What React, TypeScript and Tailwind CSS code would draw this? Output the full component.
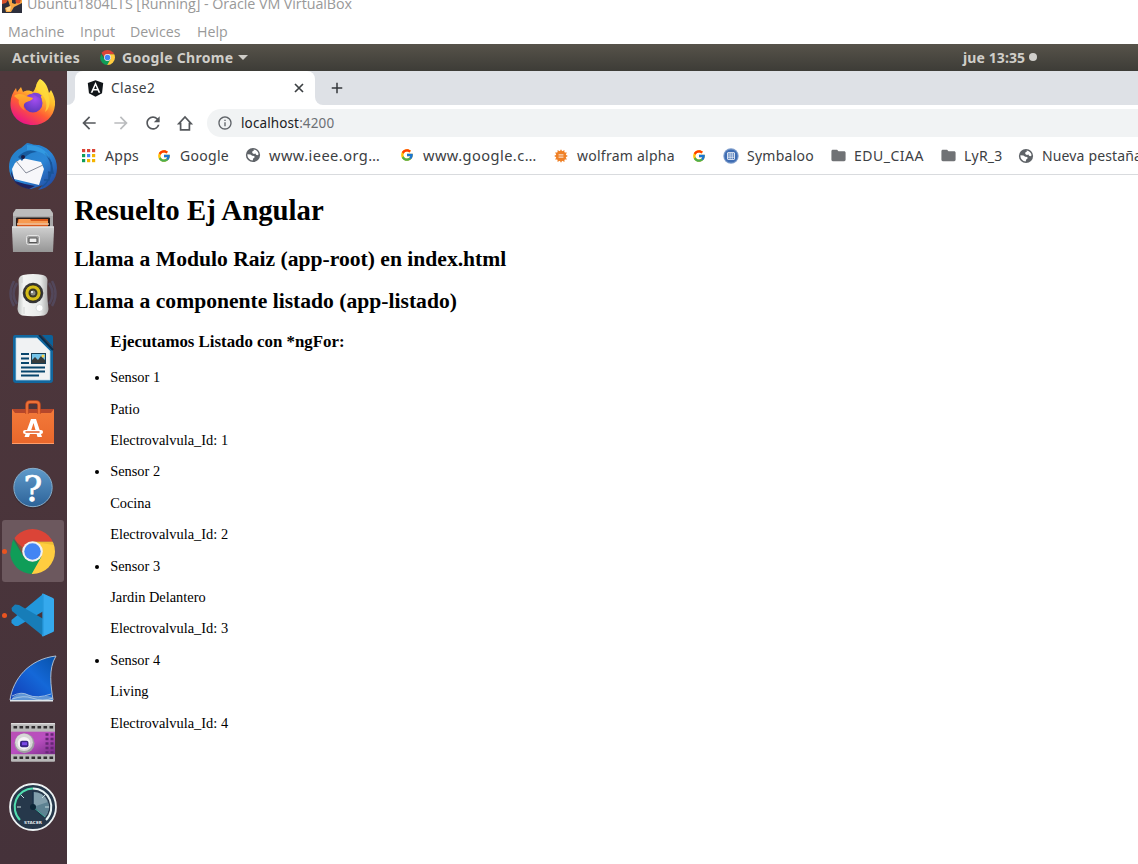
import React from "react";
import { FcGoogle } from "react-icons/fc";
import { FaAngular } from "react-icons/fa";
import { MdArrowBack, MdArrowForward, MdRefresh, MdInfoOutline, MdFolder, MdAdd } from "react-icons/md";

function ChromeIcon({ className, id }: { className: string; id: string }) {
  return (
    <svg viewBox="0 0 48 48" className={className}>
      <defs>
        <clipPath id={id}>
          <circle cx="24" cy="24" r="24" />
        </clipPath>
      </defs>
      <g clipPath={`url(#${id})`}>
        <path d="M0 0H48V13.5H24L14.5 29Z" fill="#db4437" />
        <path d="M3 10L14.6 29.5L24 35L34 29.5L24 50H-4Z" fill="#0f9d58" />
        <path d="M24 13.5H50V50H22L33.5 29.5Z" fill="#ffcd40" />
        <path d="M24 13.5H46L47 17Z" fill="#c79a1b" opacity=".3" />
        <path d="M14.6 29.5L3 10L16 22Z" fill="#0b6b3c" opacity=".4" />
      </g>
      <circle cx="24" cy="24" r="11" fill="#f1f1f1" />
      <circle cx="24" cy="24" r="8.8" fill="#4285f4" />
    </svg>
  );
}

function Globe() {
  return (
    <svg viewBox="0 0 16 16" className="size-4">
      <circle cx="8" cy="8" r="7.1" fill="#5f6368" />
      <path d="M8.6 2.4C11 2.5 13.3 4.5 13.6 7.2L12.6 8.3L11 7.8L10.6 6.6L8.900 6.9L7.2 5.9L7.4 4.3L8.8 3.7Z" fill="#fff" />
      <path d="M2.4 7.3L5.4 7.5L7.2 8.8L9.2 8.9L9.7 10.3L8.2 11.4L7.7 13.5C4.7 13.4 2.2 10.7 2.4 7.3Z" fill="#fff" />
    </svg>
  );
}

function AppsGrid() {
  const colors = ["#db4437", "#db4437", "#db4437", "#0f9d58", "#4285f4", "#f4b400", "#0f9d58", "#f4b400", "#f4b400"];
  return (
    <svg viewBox="0 0 14 14" className="size-[14px]">
      {colors.map((c, i) => (
        <rect key={i} x={(i % 3) * 5} y={Math.floor(i / 3) * 5} width="3.2" height="3.2" fill={c} />
      ))}
    </svg>
  );
}

function Wolfram() {
  return (
    <svg viewBox="-8 -8 16 16" className="size-[14px]">
      <g fill="#ef8026">
        {[0, 30, 60, 90, 120, 150, 180, 210, 240, 270, 300, 330].map((a) => (
          <path key={a} d="M-1.9 -4.5L0 -7.8L1.9 -4.5Z" transform={`rotate(${a})`} />
        ))}
        <circle r="5.5" />
      </g>
      <path d="M-2.8 -1.3H2.8M-2.8 1.3H2.8" stroke="#fff" strokeWidth="1" />
    </svg>
  );
}

function Symbaloo() {
  return (
    <svg viewBox="0 0 16 16" className="size-4">
      <circle cx="8" cy="8" r="7.7" fill="#7d9ccb" />
      <circle cx="8" cy="8" r="6.6" fill="#3f6db3" />
      <rect x="4.2" y="4.2" width="7.6" height="7.6" rx="1" fill="#fff" />
      <path d="M5.2 5.2h1.5v1.5H5.2zM7.4 5.2h1.4v1.5H7.4zM9.5 5.2H11v1.5H9.5zM5.2 7.3h1.5v1.5H5.2zM7.4 7.3h1.4v1.5H7.4zM9.5 7.3H11v1.5H9.5zM5.2 9.5h1.5V11H5.2zM7.4 9.5h1.4V11H7.4zM9.5 9.5H11V11H9.5z" fill="#3f6db3" />
    </svg>
  );
}

function Home() {
  return (
    <svg viewBox="0 0 18 18" className="size-[18px]" fill="none" stroke="#55585c" strokeWidth="1.7">
      <path d="M2.8 9.6H4.6V15.9H13.400V9.6H15.2L9 2.9Z" />
    </svg>
  );
}

function TabClose() {
  return (
    <svg viewBox="0 0 14 14" className="size-[14px]" fill="none" stroke="#3c4043" strokeWidth="1.7">
      <path d="M3 3L11 11M11 3L3 11" />
    </svg>
  );
}

function VirtualBoxIcon() {
  return (
    <svg viewBox="0 0 20 13" className="h-[13px] w-5">
      <rect width="20" height="13" fill="#2d2f3c" />
      <path d="M0 0H6L4 3L0 4Z" fill="#d9532c" />
      <path d="M6 0H10L10 3L13 4L19 0H20V3L12 7L9 12H4L3 8L8 6Z" fill="#f6a744" />
      <path d="M4 8L9 6L8 11H5Z" fill="#ffd58d" />
      <circle cx="16" cy="1" r="2.5" fill="#dc4f2c" />
    </svg>
  );
}

const Firefox = () => (
  <svg viewBox="0 0 48 48" className="size-12">
    <defs>
      <linearGradient id="ff1" x1=".85" y1=".05" x2=".3" y2="1">
        <stop offset="0" stopColor="#fff14b" />
        <stop offset=".35" stopColor="#ffbd2c" />
        <stop offset=".65" stopColor="#ff5a35" />
        <stop offset="1" stopColor="#e8118a" />
      </linearGradient>
      <radialGradient id="ff2" cx=".6" cy=".3" r=".8">
        <stop offset="0" stopColor="#a54df0" />
        <stop offset="1" stopColor="#5535b5" />
      </radialGradient>
      <linearGradient id="ff3" x1="0" y1="0" x2="0" y2="1">
        <stop offset="0" stopColor="#ffb02e" />
        <stop offset="1" stopColor="#ff7a2a" />
      </linearGradient>
    </defs>
    <path d="M31 0C37 3 39 9 40 14L42 11C45 16 46.5 21 46 26C45 38 36 46 24 46C11 46 1 37 1.5 24C1.7 18 4 13 7 9L8 13L12 8L14 13C17 11 21 11 24 13C27 10 27 4 31 0Z" fill="url(#ff1)" />
    <circle cx="24" cy="24" r="9.5" fill="url(#ff2)" />
    <path d="M23 14C27 13 31 14 33 17C31 17 32 18 33 21C30 18 26 17 23 14Z" fill="#7c43d6" />
    <path d="M5 17C9 14 14 15 17 17L24 19C23 22 19 22 16 24C14 26 14 29 17 32C10 29 9 23 10 21Z" fill="url(#ff3)" />
    <path d="M31 0C31 6 38 10 40 18C42 26 39 31 36 33C40 23 35 17 30 13C26 11 26 4 31 0Z" fill="#ffdd3c" opacity=".7" />
  </svg>
);

const Thunderbird = () => (
  <svg viewBox="0 0 48 48" className="size-12">
    <defs>
      <linearGradient id="tb" x1="0" y1="0" x2="1" y2="1">
        <stop offset="0" stopColor="#237fc6" />
        <stop offset=".55" stopColor="#2b86d6" />
        <stop offset="1" stopColor="#203a93" />
      </linearGradient>
    </defs>
    <path d="M18 0C24 1 24 2 30 2C41 5 48 14 48 25C48 37 40 45 29 47L34 42L22 46C9 44 0 36 0 24C0 15 5 8 12 5Z" fill="url(#tb)" />
    <path d="M6 20L13 15L32 19L35 26L30 42L5 36L3 26Z" fill="#f7f7fa" />
    <path d="M7 18L17 30L34 22" fill="none" stroke="#858b99" strokeWidth="1" />
    <path d="M2 28L6 38L16 41L26 43L20 46C9 44 2 38 2 28Z" fill="#20235f" />
    <path d="M9 14C14 8 21 6 28 9C22 9 16 13 13 18Z" fill="#165b9f" />
    <circle cx="14" cy="14" r="2" fill="#1b1c43" />
    <path d="M36 10C46 20 44 36 33 44M42 19L44 30L39 29M40 29L40 37L35 37" fill="none" stroke="#195398" strokeWidth="1.500" />
    <path d="M18 2C28 2 38 6 41 16C34 9 27 7 18 7Z" fill="#38a4e8" opacity=".65" />
  </svg>
);

const Files = () => (
  <svg viewBox="0 0 48 48" className="size-12">
    <defs>
      <linearGradient id="fl" x1="0" y1="0" x2="0" y2="1">
        <stop offset="0" stopColor="#d0d0d0" />
        <stop offset="1" stopColor="#969696" />
      </linearGradient>
    </defs>
    <path d="M7 2H41L44 6V24H4V6Z" fill="#a9a9a9" />
    <path d="M7 2H41L44 7V9H4V7Z" fill="#bcbcbc" />
    <rect x="7" y="10.500" width="34" height="9" rx="1" fill="#291c18" />
    <path d="M9 12H39V20H8Z" fill="#d9581a" />
    <path d="M10 12H21L22 14H39V16H9Z" fill="#f79a50" />
    <path d="M8 17H40" stroke="#fff0cf" strokeWidth="1.200" />
    <path d="M3 19.500H45V23L44 45H4L3 23Z" fill="url(#fl)" />
    <path d="M3 20H45" stroke="#eee" />
    <rect x="17.500" y="28.500" width="13" height="9" rx="2" fill="#a3a3a3" stroke="#e5e5e5" />
    <rect x="20" y="31" width="8" height="4.500" rx=".5" fill="#eee" stroke="#555" strokeWidth="1.100" />
  </svg>
);

const Speaker = () => (
  <svg viewBox="0 0 48 48" className="size-12">
    <defs>
      <linearGradient id="sp" x1="0" y1="0" x2="1" y2="0">
        <stop offset="0" stopColor="#bcc1bf" />
        <stop offset=".2" stopColor="#f4f5f4" />
        <stop offset=".75" stopColor="#e7e9e8" />
        <stop offset="1" stopColor="#aaa" />
      </linearGradient>
    </defs>
    <path d="M5 10Q-2 23 5 35M43 10Q50 23 43 35M8 12Q1 23 8 33M40 12Q47 23 40 33" fill="none" stroke="#5d6696" strokeWidth="2.500" opacity=".35" />
    <path d="M14 4Q24 2 34 4Q38 5 38.500 9Q37.500 22 39.500 38Q39 43 35 44.500Q24 46 13 44.500Q9 43 8.500 38Q10.500 22 9.500 9Q10 5 14 4Z" fill="url(#sp)" />
    <circle cx="24" cy="22" r="10.300" fill="#363638" />
    <circle cx="24" cy="22" r="8" fill="#d5bd18" stroke="#151515" strokeWidth=".6" />
    <circle cx="24" cy="22" r="4.500" fill="#3b3828" />
    <circle cx="24" cy="22" r="2.500" fill="#8a8b84" />
    <circle cx="23" cy="21" r="1.100" fill="#fff" />
    <circle cx="30.500" cy="37" r="3.500" fill="#fff" stroke="#d0d2d2" strokeWidth=".7" />
    <path d="M13 6V12M35 6V12M15 36V43" stroke="#cbcecd" strokeWidth=".8" />
  </svg>
);

const Writer = () => (
  <svg viewBox="0 0 48 48" className="size-12">
    <path d="M6 0H31L44 13V45Q44 48 41 48H7Q4 48 4 45V3Q4 0 6 0Z" fill="#11679f" />
    <path d="M33 0H42Q44 0 44 2V12Z" fill="#0b629b" />
    <path d="M30 0L44 15" stroke="#0a2d4a" strokeWidth="2" />
    <path d="M7 3H28L41 16V45H7Z" fill="#f0f2f3" stroke="#b4d7e9" strokeWidth=".7" />
    <path d="M12 19H20M12 23.500H20M12 28H20M12 32.500H36M12 36.500H36M12 40.500H30" stroke="#07456c" strokeWidth="1.800" />
    <rect x="22.500" y="18.500" width="14" height="10" fill="#74c4e9" stroke="#173f57" />
    <path d="M23 28V25L26 22L29 25L32 21L36 25V28Z" fill="#373b3b" />
    <circle cx="34" cy="21" r="1.500" fill="#ffd246" />
  </svg>
);

const Software = () => (
  <svg viewBox="0 0 48 48" className="size-12">
    <defs>
      <linearGradient id="sw" x1="0" y1="0" x2="0" y2="1">
        <stop offset="0" stopColor="#f37a3a" />
        <stop offset="1" stopColor="#e9672b" />
      </linearGradient>
    </defs>
    <path d="M3 10H45V45H3Z" fill="url(#sw)" />
    <path d="M3 10H45L42 14H6Z" fill="#b5472b" />
    <path d="M18 15V6Q18 3 21 3H27Q30 3 30 6V15" fill="none" stroke="#c44d22" strokeWidth="3.500" />
    <path d="M18 15V6Q18 3 21 3H27Q30 3 30 6V15" fill="none" stroke="#ed7138" strokeWidth="1.800" />
    <path d="M22 20H27L33 38H28.500L24.500 24L20 38H15.500Z" fill="#fff" />
    <path d="M16 33H32" stroke="#fff" strokeWidth="4" strokeLinecap="round" />
    <path d="M17 33H30" stroke="#e45d27" strokeWidth="1.500" strokeLinecap="round" />
    <path d="M3 44.500H45" stroke="#ff9d6a" />
  </svg>
);

const Help = () => (
  <svg viewBox="0 -0.5 48 48" className="size-12">
    <defs>
      <linearGradient id="hp" x1="0" y1="0" x2="0" y2="1">
        <stop offset="0" stopColor="#5f9aca" />
        <stop offset="1" stopColor="#2d6399" />
      </linearGradient>
    </defs>
    <circle cx="24" cy="25" r="20" fill="#342933" opacity=".65" />
    <circle cx="24" cy="24" r="19.200" fill="url(#hp)" stroke="#89aeca" />
    <text x="24" y="37" textAnchor="middle" fill="#fff" stroke="#fff" strokeWidth=".7" className="font-['DejaVu_Serif',serif] text-[35px]">?</text>
  </svg>
);

const VSCode = () => (
  <svg viewBox="1.5 0 46 48" className="h-12 w-[47px]">
    <path d="M34 3L45 8V14L9 35H6L2.500 32V29Z" fill="#2297db" />
    <path d="M2.500 17L6 13.500L10 14L45 34V40L34 45L3 20Z" fill="#177db8" />
    <path d="M34 2.500L44 7Q45 8 45 9V39Q45 41 44 41L34 45.500Q32 45 33.500 43V5Q32 3 34 2.500Z" fill="#35a9ed" />
    <path d="M34 3V45" stroke="#1687ca" strokeWidth=".6" />
  </svg>
);

const Wireshark = () => (
  <svg viewBox="0 0 48 48" className="size-12">
    <defs>
      <linearGradient id="ws" x1="1" y1="0" x2="0" y2="1">
        <stop offset="0" stopColor="#0751a8" />
        <stop offset=".45" stopColor="#1468d8" />
        <stop offset="1" stopColor="#123bb4" />
      </linearGradient>
    </defs>
    <path d="M1 45C4 24 20 4 47 1C39 14 42 31 44 45H1Z" fill="url(#ws)" stroke="#b9c9da" strokeWidth=".9" />
    <path d="M4 42C13 36 17 39 22 41C31 44 36 39 43 42L44 46H2Z" fill="#5f95d6" />
    <path d="M3 41Q13 36 19 40Q28 44 42 39M3 44Q15 40 23 43Q34 47 44 43" fill="none" stroke="#b9d0e6" strokeWidth=".8" />
    <path d="M1 45.700H44" stroke="#dfe6ea" strokeWidth="1.500" />
  </svg>
);

const Kazam = () => (
  <svg viewBox="0 0.8 48 48" className="size-12">
    <defs>
      <linearGradient id="kz" x1="0" y1="0" x2="1" y2="1">
        <stop offset="0" stopColor="#b950b5" />
        <stop offset=".5" stopColor="#b94fc0" />
        <stop offset="1" stopColor="#792b88" />
      </linearGradient>
    </defs>
    <rect x="2" y="5" width="44" height="38.500" rx="1" fill="#b9b9b9" />
    <rect x="2" y="13.500" width="44" height="22.500" fill="url(#kz)" />
    <path d="M4.500 9H46M4.500 39.500H46" stroke="#302e30" strokeWidth="2.500" strokeDasharray="3.600 2.400" />
    <path d="M2 5.500H46" stroke="#eee" />
    <path d="M38 15V35M43 15V35" stroke="#652775" strokeWidth="3" strokeDasharray="2.500 2" />
    <circle cx="15.500" cy="25" r="10" fill="#a0a0a3" />
    <circle cx="15" cy="24" r="8.800" fill="#d7d7d7" />
    <circle cx="15" cy="25" r="6.200" fill="#f6f4f7" />
    <rect x="11" y="22.500" width="8.500" height="6.500" rx="2" fill="#3a2484" />
    <rect x="13" y="24" width="5" height="3" fill="#7948e6" />
  </svg>
);

const Stacer = () => (
  <svg viewBox="0 0 48 48" className="size-12">
    <circle cx="24" cy="24" r="23" fill="#26384b" stroke="#edf2f3" strokeWidth="1.800" />
    <path d="M24 24V9A15 15 0 0 1 36 34Z" fill="#829fac" />
    <path d="M24 24L39 19A16 16 0 0 1 36 34Z" fill="#5d8292" />
    <path d="M11 37A18.500 18.500 0 0 1 24 5.500" fill="none" stroke="#52deb0" strokeWidth="2" />
    <path d="M24 5.500A18.500 18.500 0 0 1 37 37" fill="none" stroke="#e7f4f4" strokeWidth="2" />
    <path d="M24 8V24L35 34" fill="none" stroke="#193148" strokeWidth="1.500" />
    <path d="M24 24L36 34" stroke="#48b5a0" strokeWidth="1" />
    <path d="M8 24H12M36 24H40M12 12L15 15M36 12L33 15" stroke="#c9dce0" strokeWidth="1" />
    <circle cx="24" cy="24" r="3" fill="#0c2637" />
    <text x="24" y="41" textAnchor="middle" fill="#e3eaee" className="font-['DejaVu_Sans',sans-serif] text-[4.2px] font-bold">STACER</text>
  </svg>
);

const dock = [
  { name: "firefox", icon: <Firefox /> },
  { name: "thunderbird", icon: <Thunderbird /> },
  { name: "files", icon: <Files /> },
  { name: "rhythmbox", icon: <Speaker /> },
  { name: "writer", icon: <Writer /> },
  { name: "software", icon: <Software /> },
  { name: "help", icon: <Help /> },
  { name: "chrome", icon: <ChromeIcon id="chrome-dock" className="-ml-px size-[45px]" />, running: true, active: true },
  { name: "vscode", icon: <VSCode />, running: true },
  { name: "wireshark", icon: <Wireshark /> },
  { name: "kazam", icon: <Kazam /> },
  { name: "stacer", icon: <Stacer /> },
];

function Bookmark({ icon, label, className }: { icon: React.ReactNode; label?: string; className: string }) {
  return (
    <div className={`flex shrink-0 items-center whitespace-nowrap ${className}`}>
      <span className="flex w-4 shrink-0 justify-center">{icon}</span>
      {label && <span className="ml-2">{label}</span>}
    </div>
  );
}

const sensors = [
  { id: 1, place: "Patio" },
  { id: 2, place: "Cocina" },
  { id: 3, place: "Jardin Delantero" },
  { id: 4, place: "Living" },
];

export default function App() {
  return (
    <div className="flex h-[864px] w-[1138px] flex-col overflow-hidden bg-white font-['Noto_Sans',sans-serif]">
      <header className="h-11 shrink-0 overflow-hidden font-['Open_Sans',sans-serif] text-[14.2px] text-[#999]">
        <div className="flex h-[13px] items-start overflow-hidden pl-[2px]">
          <VirtualBoxIcon />
          <span className="-mt-[6px] ml-[5px] text-[14.3px] leading-5 tracking-[-0.06px] whitespace-nowrap">Ubuntu1804LTS [Running] - Oracle VM VirtualBox</span>
        </div>
        <nav className="mt-[9px] flex pl-2 leading-5">
          <span className="w-[72px]">Machine</span>
          <span className="w-[50px]">Input</span>
          <span className="w-[67px]">Devices</span>
          <span>Help</span>
        </nav>
      </header>

      <div className="flex h-[27px] shrink-0 items-center bg-linear-to-b from-[#57534a] to-[#3d3c37] pl-3 text-[14px] font-bold text-[#d0cec9]">
        <span className="w-[88px] tracking-[0.3px]">Activities</span>
        <ChromeIcon id="chrome-panel" className="size-[15px]" />
        <span className="ml-[7px] w-[116px] tracking-[0.3px] whitespace-nowrap">Google Chrome</span>
        <svg viewBox="0 0 10 5" className="h-[5px] w-[10px]"><path d="M0 0H10L5 5Z" fill="#cfcdc8" /></svg>
        <span className="-mt-px ml-[715px] w-[66px] tracking-[0.1px] whitespace-nowrap">jue 13:35</span>
        <span className="-mt-px size-2 rounded-full bg-[#d0cfcb]" />
      </div>

      <div className="flex min-h-0 flex-1">
        <aside className="flex w-[67px] shrink-0 flex-col bg-linear-to-b from-[#50383c] to-[#45323a]">
          {dock.map((d) => (
            <div key={d.name} className="flex h-16 w-full shrink-0 items-center">
              <div className={`ml-[2px] flex h-[62px] w-[62px] items-center rounded-[3px] ${d.active ? "bg-[#6c585e]" : ""}`}>
                <span className={`size-[5px] rounded-full ${d.running ? "bg-[#e95420]" : ""}`} />
                <div className="ml-[2px] flex w-12 shrink-0 items-center justify-center">{d.icon}</div>
              </div>
            </div>
          ))}
        </aside>

        <section className="flex min-w-0 flex-1 flex-col overflow-hidden">
          <div className="flex h-[34px] shrink-0 bg-[#dee1e6]">
            <div className="flex w-2 bg-white"><span className="h-full w-full rounded-br-lg bg-[#dee1e6]" /></div>
            <div className="flex w-[240px] items-center rounded-t-lg bg-white pl-[11px] text-[14px] text-[#3c4043]">
              <FaAngular className="size-[19px] text-[#111519]" />
              <span className="ml-[6px] w-[181px] text-[13.7px] tracking-[0.35px]">Clase2</span>
              <TabClose />
            </div>
            <div className="flex w-2 bg-white"><span className="h-full w-full rounded-bl-lg bg-[#dee1e6]" /></div>
            <MdAdd className="mt-[8px] ml-[5px] size-[18px] text-[#34373b]" />
          </div>

          <div className="flex h-9 shrink-0 items-center pl-[12px] text-[#55585c]">
            <MdArrowBack className="size-[20px]" />
            <MdArrowForward className="ml-[12px] size-[20px] text-[#babcbe]" />
            <MdRefresh className="ml-[12px] size-[20px]" />
            <span className="ml-[13px]"><Home /></span>
            <div className="ml-[13px] flex h-7 flex-1 items-center rounded-l-full bg-[#f1f3f4] pl-[10px] text-[14px] text-[#202124]">
              <MdInfoOutline className="size-[16px] text-[#5f6368]" />
              <span className="ml-2 text-[13.5px] tracking-[0.12px]">localhost<span className="text-[#6c7074]">:4200</span></span>
            </div>
          </div>

          <div className="flex h-[34px] shrink-0 items-center overflow-hidden border-b border-[#d9dbde] pb-[4px] pl-[14px] text-[14px] text-[#3c4043]">
            <Bookmark className="w-[75px] tracking-[0.3px]" icon={<AppsGrid />} label="Apps" />
            <Bookmark className="w-[89px] tracking-[0.3px]" icon={<FcGoogle className="size-[14px]" />} label="Google" />
            <Bookmark className="w-[154px] text-[14.6px] tracking-[0.45px]" icon={<Globe />} label="www.ieee.org…" />
            <Bookmark className="w-[154px] text-[14.6px] tracking-[0.45px]" icon={<FcGoogle className="size-[14px]" />} label="www.google.c…" />
            <Bookmark className="w-[138px] tracking-[0.25px]" icon={<Wolfram />} label="wolfram alpha" />
            <Bookmark className="w-8" icon={<FcGoogle className="size-[14px]" />} />
            <Bookmark className="w-[107px] tracking-[0.25px]" icon={<Symbaloo />} label="Symbaloo" />
            <Bookmark className="w-[110px] tracking-[0.5px]" icon={<MdFolder className="size-[17px] shrink-0 text-[#707275]" />} label="EDU_CIAA" />
            <Bookmark className="w-[78px] tracking-[0.2px]" icon={<MdFolder className="size-[17px] shrink-0 text-[#707275]" />} label="LyR_3" />
            <Bookmark className="w-[140px] tracking-[0.15px]" icon={<Globe />} label="Nueva pestaña" />
          </div>

          <main className="flex-1 bg-white px-[7.2px] font-['Liberation_Serif',serif] text-[14.4px] leading-[17px] text-black">
            <h1 className="mt-[19.3px] text-[28.8px] leading-[33px] font-bold">Resuelto Ej Angular</h1>
            <h2 className="mt-[19.3px] text-[21.6px] leading-[24px] font-bold">Llama a Modulo Raiz (app-root) en index.html</h2>
            <h2 className="mt-[18.9px] text-[21.6px] leading-[25px] font-bold">Llama a componente listado (app-listado)</h2>
            <ul className="mt-[16.9px] list-disc pl-9">
              <h3 className="mb-[16.85px] text-[16.85px] leading-[21px] font-bold">Ejecutamos Listado con *ngFor:</h3>
              {sensors.map((s) => (
                <li key={s.id} className="mb-[14.4px]">
                  Sensor {s.id}
                  <p className="mt-[14.4px]">{s.place}</p>
                  <p className="mt-[14.4px]">Electrovalvula_Id: {s.id}</p>
                </li>
              ))}
            </ul>
          </main>
        </section>
      </div>
    </div>
  );
}
